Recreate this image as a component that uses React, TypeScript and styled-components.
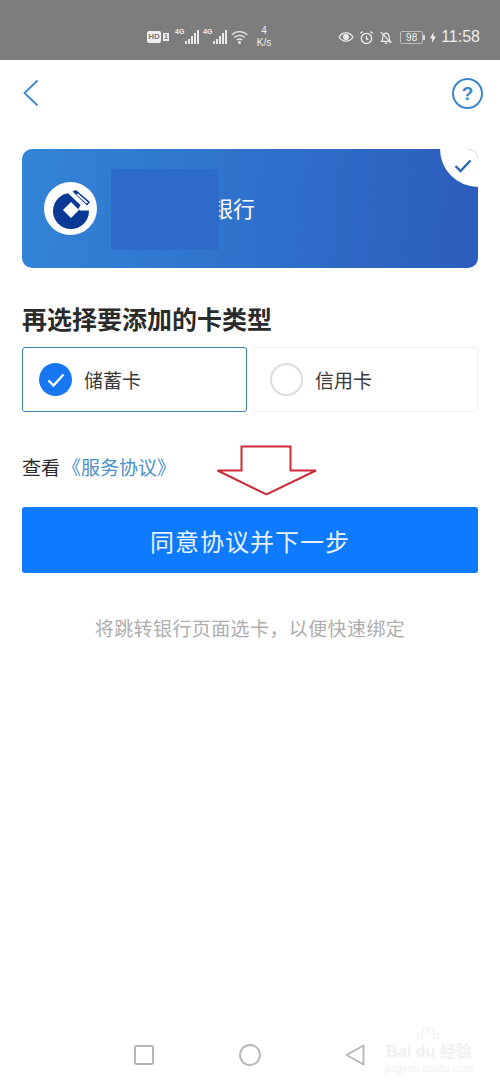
import styled, { createGlobalStyle } from "styled-components";

const Global = createGlobalStyle`
  html, body {
    margin: 0;
    padding: 0;
    background: #fff;
  }
  body {
    font-family: "Liberation Sans", "Noto Sans CJK SC", sans-serif;
  }
`;

const App = () => {
  return (
    <Page>
      <Global />
      <StatusBar>
        <HdBadge>HD</HdBadge>
        <SimBadge>1</SimBadge>
        <Signal />
        <Signal />
        <svg width="17" height="14" viewBox="0 0 17 14" fill="none" stroke="#e8e8e8" strokeWidth="1.4">
          <path d="M.7 4.800c4.500-4.200 11.100-4.200 15.600 0" />
          <path d="M3.200 7.500c3-2.800 7.600-2.800 10.600 0" />
          <path d="M5.800 10c1.600-1.300 3.800-1.300 5.400 0" />
          <circle cx="8.500" cy="12.500" r="0.8" fill="#e8e8e8" />
        </svg>
        <Speed>
          <span>4</span>
          <span>K/s</span>
        </Speed>
        <StatusRight>
          <svg width="16" height="12" viewBox="0 0 17 13" fill="none" stroke="#eee" strokeWidth="1.4">
            <path d="M1 6.500c3.500-6 11.500-6 15 0-3.500 6-11.500 6-15 0z" />
            <circle cx="8.500" cy="6.500" r="2.500" fill="#eee" />
          </svg>
          <svg width="15" height="15" viewBox="0 0 16 16" fill="none" stroke="#eee" strokeWidth="1.4">
            <circle cx="8" cy="9" r="5.500" />
            <path d="M8 6v3.500l2 1M1.500 3.500 4 1.500M14.500 3.500 12 1.500" />
          </svg>
          <svg width="14" height="15" viewBox="0 0 16 16" fill="none" stroke="#eee" strokeWidth="1.300">
            <path d="M3 12.500c1.500-1.500 1-3.500 1.500-6C5 4 6.500 3 8 3s3 1 3.500 3.500c.5 2.500 0 4.500 1.500 6z" />
            <path d="M6.500 14.500h3M2 1.500l12 13" />
          </svg>
          <BatteryBox>98</BatteryBox>
          <BatteryTip />
          <svg width="6" height="11" viewBox="0 0 6 11">
            <path d="M3.500 0 0 6.200h2.300L1.800 11 6 4.500H3.500z" fill="#eee" />
          </svg>
          <Clock>11:58</Clock>
        </StatusRight>
      </StatusBar>

      <NavBar>
        <svg width="18" height="28" viewBox="0 0 18 28" fill="none" stroke="#3c87c8" strokeWidth="1.800">
          <path d="M15.500 1.500 2.500 14l13 12.500" />
        </svg>
        <HelpIcon>?</HelpIcon>
      </NavBar>

      <Content>
        <BankCard>
          <CornerNotch>
            <svg width="18" height="14" viewBox="0 0 18 14" fill="none" stroke="#2d66b8" strokeWidth="2.400">
              <path d="M1.500 7l5 5L16.500 1.500" />
            </svg>
          </CornerNotch>
          <BankLogo>
            <svg width="44" height="44" viewBox="0 0 44 44">
              <circle cx="22" cy="24" r="18" fill="#0a3a96" />
              <path d="M24 3 44 20 44 23.500 31 23.500 22 15 13 9z" fill="#fff" />
              <path d="M11.500 9.500A18 18 0 0 1 19 6.200L31.500 18 28.500 23.500z" fill="#0a3a96" />
              <path d="M23.500 4.500 27 3 41 15 38 18.500z" fill="#0a3a96" />
              <path d="M27.500 7.500 29 6.500 39 15.500 37.500 16.500z" fill="#fff" />
              <path d="M22 15 30 23 22 31 14 23z" fill="#fff" />
            </svg>
          </BankLogo>
          <BankName>银行</BankName>
          <Redaction />
        </BankCard>

        <SectionTitle>再选择要添加的卡类型</SectionTitle>

        <CardTypes>
          <CardType $active>
            <CheckedDot>
              <svg width="20" height="16" viewBox="0 0 20 16" fill="none" stroke="#fff" strokeWidth="2.400">
                <path d="M2.500 8.500l5 5L17.500 2.500" />
              </svg>
            </CheckedDot>
            <CardTypeLabel>储蓄卡</CardTypeLabel>
          </CardType>
          <CardType>
            <EmptyDot />
            <CardTypeLabel>信用卡</CardTypeLabel>
          </CardType>
        </CardTypes>

        <AgreementRow>
          查看<AgreementLink>《服务协议》</AgreementLink>
          <ArrowMark width="102" height="52" viewBox="0 0 102 52" fill="none" stroke="#cc2a36" strokeWidth="2">
            <path d="M25.500 1.500h49v24H100L50.500 49.500 1.500 25.500h24z" />
          </ArrowMark>
        </AgreementRow>

        <NextButton>同意协议并下一步</NextButton>
        <Hint>将跳转银行页面选卡，以便快速绑定</Hint>
      </Content>

      <BottomNav>
        <svg width="20" height="20" viewBox="0 0 20 20" fill="none" stroke="#b5b5b5" strokeWidth="2">
          <rect x="1" y="1" width="18" height="18" rx="1.500" />
        </svg>
        <svg width="22" height="22" viewBox="0 0 22 22" fill="none" stroke="#b5b5b5" strokeWidth="1.800">
          <circle cx="11" cy="11" r="10" />
        </svg>
        <svg width="20" height="22" viewBox="0 0 20 22" fill="none" stroke="#b5b5b5" strokeWidth="1.800">
          <path d="M18.500 1.500v19L1.500 11z" strokeLinejoin="round" />
        </svg>
      </BottomNav>

      <Watermark>
        <WatermarkPaw width="24" height="16" viewBox="0 0 24 16" fill="none" stroke="#f0f0f0" strokeWidth="1.200">
          <ellipse cx="4" cy="10" rx="2.500" ry="3" />
          <ellipse cx="9" cy="4.500" rx="2.500" ry="3.500" />
          <ellipse cx="15" cy="4.500" rx="2.500" ry="3.500" />
          <ellipse cx="20" cy="10" rx="2.500" ry="3" />
        </WatermarkPaw>
        <WatermarkTitle>Bai du 经验</WatermarkTitle>
        <WatermarkUrl>jingyan.baidu.com</WatermarkUrl>
      </Watermark>
    </Page>
  );
};

const Signal = () => (
  <SignalWrap>
    <SignalTag>4G</SignalTag>
    <svg width="14" height="14" viewBox="0 0 14 14" fill="#e8e8e8">
      <rect x="0" y="11" width="2" height="3" />
      <rect x="3" y="9" width="2" height="5" />
      <rect x="6" y="6" width="2" height="8" />
      <rect x="9" y="3" width="2" height="11" />
      <rect x="12" y="0" width="2" height="14" />
    </svg>
  </SignalWrap>
);

const Page = styled.div`
  position: relative;
  width: 500px;
  height: 1084px;
  overflow: hidden;
  background: #fff;
  display: flex;
  flex-direction: column;
`;

const StatusBar = styled.div`
  height: 60px;
  flex-shrink: 0;
  box-sizing: border-box;
  padding: 14px 20px 0 147px;
  background: #7d7d7d;
  color: #eee;
  display: flex;
  align-items: center;
  gap: 4px;
`;

const HdBadge = styled.span`
  width: 14px;
  height: 12px;
  background: #eee;
  color: #7d7d7d;
  font-size: 8px;
  font-weight: bold;
  line-height: 12px;
  text-align: center;
  border-radius: 2px;
`;

const SimBadge = styled.span`
  background: #eee;
  color: #7d7d7d;
  font-size: 7px;
  font-weight: bold;
  width: 6px;
  height: 8px;
  line-height: 8px;
  text-align: center;
  margin: 0 2px 0 -2px;
`;

const SignalWrap = styled.span`
  display: inline-flex;
  align-items: flex-end;
  position: relative;
  width: 24px;
  justify-content: flex-end;
`;

const SignalTag = styled.span`
  position: absolute;
  left: 0;
  top: -2px;
  font-size: 7px;
  font-weight: bold;
`;

const Speed = styled.span`
  width: 18px;
  display: flex;
  flex-direction: column;
  align-items: center;
  font-size: 10px;
  line-height: 12px;
  margin-left: 3px;
`;

const StatusRight = styled.div`
  margin-left: auto;
  display: flex;
  align-items: center;
  gap: 5px;
`;

const BatteryBox = styled.span`
  box-sizing: border-box;
  width: 23px;
  height: 13px;
  border: 1px solid #bbb;
  border-radius: 2px;
  font-size: 10px;
  line-height: 11px;
  text-align: center;
  margin-left: 2px;
`;

const BatteryTip = styled.span`
  width: 2px;
  height: 5px;
  background: #ddd;
  margin-left: -5px;
`;

const Clock = styled.span`
  font-size: 16px;
`;

const NavBar = styled.div`
  height: 66px;
  box-sizing: border-box;
  padding: 0 17px 0 22px;
  display: flex;
  align-items: center;
  justify-content: space-between;
`;

const HelpIcon = styled.div`
  box-sizing: border-box;
  width: 31px;
  height: 31px;
  border: 2px solid #3c87c8;
  border-radius: 50%;
  color: #3c87c8;
  font-size: 19px;
  font-weight: bold;
  line-height: 27px;
  text-align: center;
`;

const Content = styled.div`
  padding: 23px 22px 0;
  display: flex;
  flex-direction: column;
`;

const BankCard = styled.div`
  position: relative;
  height: 119px;
  border-radius: 10px;
  background: linear-gradient(95deg, #3284d6 0%, #2f6fcb 55%, #2c5cbc 100%);
  display: flex;
  align-items: center;
  padding-left: 22px;
  overflow: hidden;
`;

const CornerNotch = styled.div`
  position: absolute;
  top: -38px;
  right: -38px;
  width: 76px;
  height: 76px;
  border-radius: 50%;
  background: #fff;
  display: flex;
  align-items: center;
  justify-content: center;
  box-sizing: border-box;
  padding: 38px 38px 0 0;
  & > svg {
    flex-shrink: 0;
    margin: -5px -8px 0 0;
  }
`;

const BankLogo = styled.div`
  width: 53px;
  height: 53px;
  border-radius: 50%;
  background: #fff;
  display: flex;
  align-items: center;
  justify-content: center;
`;

const Redaction = styled.div`
  position: absolute;
  left: 89px;
  top: 20px;
  width: 108px;
  height: 81px;
  background: #2e6bc8;
`;

const BankName = styled.span`
  margin: 0 0 4px 114px;
  font-size: 22px;
  color: #fff;
`;

const SectionTitle = styled.h2`
  margin: 37px 0 12px;
  font-size: 25px;
  line-height: 30px;
  font-weight: bold;
  color: #2b2b2b;
`;

const CardTypes = styled.div`
  display: grid;
  grid-template-columns: 225px 225px;
  gap: 6px;
`;

const CardType = styled.div<{ $active?: boolean }>`
  box-sizing: border-box;
  height: 65px;
  padding-left: 16px;
  display: flex;
  align-items: center;
  gap: 12px;
  border-radius: 3px;
  border: ${(p) => (p.$active ? "1.5px solid #3f7fb0" : "1.5px solid #f2f2f2")};
`;

const CheckedDot = styled.div`
  width: 33px;
  height: 33px;
  border-radius: 50%;
  background: #1677f0;
  display: flex;
  align-items: center;
  justify-content: center;
`;

const EmptyDot = styled.div`
  box-sizing: border-box;
  width: 33px;
  height: 33px;
  border-radius: 50%;
  border: 2px solid #dcdcdc;
`;

const CardTypeLabel = styled.span`
  font-size: 19px;
  color: #3a3a3a;
`;

const AgreementRow = styled.div`
  position: relative;
  margin-top: 44px;
  height: 26px;
  font-size: 19px;
  line-height: 26px;
  color: #2b2b2b;
`;

const AgreementLink = styled.span`
  margin-left: 2px;
  color: #4a90c8;
`;

const ArrowMark = styled.svg`
  position: absolute;
  left: 194px;
  top: -11px;
`;

const NextButton = styled.button`
  margin-top: 25px;
  height: 66px;
  border: none;
  border-radius: 3px;
  background: #0d7aff;
  color: #e9f2fc;
  font-family: inherit;
  font-size: 24px;
  letter-spacing: 1px;
`;

const Hint = styled.div`
  margin-top: 45px;
  text-align: center;
  font-size: 19px;
  line-height: 24px;
  letter-spacing: 0.4px;
  color: #adadad;
`;

const BottomNav = styled.div`
  margin-top: auto;
  height: 58px;
  box-sizing: border-box;
  padding: 0 135px 0 134px;
  display: flex;
  align-items: center;
  justify-content: space-between;
`;

const Watermark = styled.div`
  position: absolute;
  left: 384px;
  bottom: 10px;
  width: 90px;
  color: #f0f0f0;
  text-align: center;
`;

const WatermarkPaw = styled.svg`
  position: absolute;
  left: 32px;
  top: -12px;
`;

const WatermarkTitle = styled.div`
  font-size: 16px;
  font-weight: bold;
  white-space: nowrap;
`;

const WatermarkUrl = styled.div`
  font-size: 11px;
  white-space: nowrap;
`;

export default App;
